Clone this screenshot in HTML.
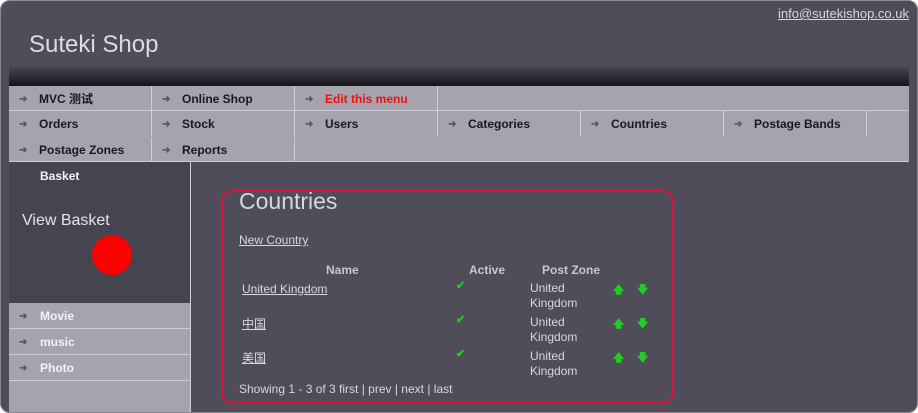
<!DOCTYPE html>
<html><head><meta charset="utf-8"><style>
*{margin:0;padding:0;box-sizing:border-box}
body{width:918px;height:413px;background:#fff;font-family:"Liberation Sans","Noto Sans CJK SC",sans-serif;overflow:hidden;position:relative}
.card{position:absolute;left:0;top:0;width:918px;height:413px;background:#4f4d5a;border-radius:10px;overflow:hidden}
.frame{position:absolute;left:0;top:0;width:918px;height:413px;border:1px solid #8a8892;border-radius:10px;pointer-events:none}
.a{position:absolute}
.mail{right:9px;top:6px;color:#d8d6de;font-size:13px;text-decoration:underline}
.title{left:29px;top:31px;color:#dcdae2;font-size:24px}
.bar{left:9px;top:66px;width:900px;height:20px;background:linear-gradient(#4a4854,#15141a)}
.menu{left:9px;top:86px;width:900px;height:76px;background:#a6a2ae;border-bottom:1px solid #cfccd6}
.c{position:absolute;height:25px;width:143px;font-size:12px;font-weight:bold;color:#1a1820;line-height:27px;padding-left:30px;border-right:1px solid #cfccd6}
.c:before{content:"➜";position:absolute;left:10px;color:#5a5862;font-size:10px}
.side{left:9px;top:162px;width:182px;height:251px;background:#a6a2ae;border-right:1px solid #cfccd6}
.dark{left:9px;top:162px;width:181px;height:141px;background:#46444f}
.s{position:absolute;left:9px;width:181px;height:26px;border-bottom:1px solid #cfccd6;color:#f4f2f8;font-size:12px;font-weight:bold;line-height:27px;padding-left:31px}
.s:before{content:"➜";position:absolute;left:10px;color:#5a5862;font-size:10px}
.box{left:221px;top:190px;width:453px;height:214px;border:2px solid #e0103a;border-radius:12px}
.t{color:#d8d6de;font-size:12px}
.u{text-decoration:underline}
.h{font-weight:bold;color:#c8c6ce;font-size:12px}
.g{color:#22cc22;font-size:11px;font-weight:bold}
</style></head><body><div class="card">
<div class="a mail">info@sutekishop.co.uk</div>
<div class="a title">Suteki Shop</div>
<div class="a bar"></div>
<div class="a menu">
<div class="c" style="left:0;top:0;border-bottom:1px solid #cfccd6">MVC 测试</div>
<div class="c" style="left:143px;top:0;border-bottom:1px solid #cfccd6">Online Shop</div>
<div class="c" style="left:286px;top:0;color:#f01010;border-bottom:1px solid #cfccd6">Edit this menu</div>
<div class="a" style="left:429px;top:0;width:471px;height:25px;border-bottom:1px solid #cfccd6"></div>
<div class="c" style="left:0;top:25px">Orders</div>
<div class="c" style="left:143px;top:25px">Stock</div>
<div class="c" style="left:286px;top:25px">Users</div>
<div class="c" style="left:429px;top:25px">Categories</div>
<div class="c" style="left:572px;top:25px">Countries</div>
<div class="c" style="left:715px;top:25px">Postage Bands</div>
<div class="c" style="left:0;top:51px">Postage Zones</div>
<div class="c" style="left:143px;top:51px">Reports</div>
<div class="a" style="left:285px;top:51px;height:25px;border-right:1px solid #cfccd6"></div>
</div>
<div class="a side"></div>
<div class="a dark"></div>
<div class="a" style="left:40px;top:169px;color:#f4f2f8;font-size:12px;font-weight:bold">Basket</div>
<div class="a" style="left:22px;top:212px;color:#e4e2ea;font-size:16px">View Basket</div>
<div class="a" style="left:92px;top:235px;width:40px;height:40px;border-radius:50%;background:#ff0000"></div>
<div class="s" style="top:303px">Movie</div>
<div class="s" style="top:329px">music</div>
<div class="s" style="top:355px">Photo</div>
<div class="a box"></div>
<div class="a" style="left:239px;top:188px;color:#d8d6de;font-size:23px">Countries</div>
<div class="a t u" style="left:239px;top:233px">New Country</div>
<div class="a h" style="left:326px;top:263px">Name</div>
<div class="a h" style="left:469px;top:263px">Active</div>
<div class="a h" style="left:542px;top:263px">Post Zone</div>
<div class="a t u" style="left:242px;top:282px">United Kingdom</div>
<div class="a t u" style="left:242px;top:315px">中国</div>
<div class="a t u" style="left:242px;top:349px">美国</div>
<div class="a g" style="left:456px;top:279px">✔</div>
<div class="a g" style="left:456px;top:313px">✔</div>
<div class="a g" style="left:456px;top:347px">✔</div>
<div class="a t" style="left:530px;top:281px;line-height:15px">United<br>Kingdom</div>
<div class="a t" style="left:530px;top:315px;line-height:15px">United<br>Kingdom</div>
<div class="a t" style="left:530px;top:349px;line-height:15px">United<br>Kingdom</div>
<div class="a g" style="left:613px;top:281px">🡅</div><div class="a g" style="left:637px;top:281px">🡇</div>
<div class="a g" style="left:613px;top:315px">🡅</div><div class="a g" style="left:637px;top:315px">🡇</div>
<div class="a g" style="left:613px;top:349px">🡅</div><div class="a g" style="left:637px;top:349px">🡇</div>
<div class="a t" style="left:239px;top:382px">Showing 1 - 3 of 3 first | prev | next | last</div>
</div><div class="frame"></div></body></html>
